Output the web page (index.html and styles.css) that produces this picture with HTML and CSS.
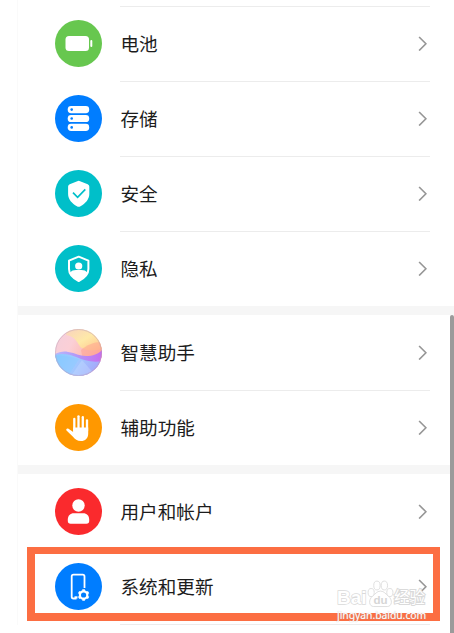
FILE: index.html
```
<!DOCTYPE html>
<html lang="zh-CN">
<head>
  <meta charset="UTF-8">
  <meta name="viewport" content="width=device-width, initial-scale=1.0">
  <title>设置</title>
  <link rel="stylesheet" href="styles.css">
</head>
<body>
  <div class="settings">
    <div class="group">
      <div class="item">
        <svg class="icon" viewBox="0 0 47 47">
          <circle cx="23.5" cy="23.5" r="23.5" fill="#67c74f"/>
          <rect x="10.5" y="16" width="23.5" height="15" rx="3.5" fill="#fff"/>
          <rect x="35.3" y="20" width="2" height="7" rx="1" fill="#fff"/>
        </svg>
        <div class="content"><span class="label">电池</span><svg class="arrow" viewBox="0 0 9 16"><path d="M1 1l7 7-7 7"/></svg></div>
      </div>
      <div class="item">
        <svg class="icon" viewBox="0 0 47 47">
          <circle cx="23.5" cy="23.5" r="23.5" fill="#007dff"/>
          <g fill="#fff">
            <rect x="12.7" y="11" width="21.5" height="7.2" rx="3.4"/>
            <rect x="12.7" y="19.9" width="21.5" height="7.2" rx="3.4"/>
            <rect x="12.7" y="28.8" width="21.5" height="7.2" rx="3.4"/>
          </g>
          <g fill="#007dff">
            <circle cx="16.7" cy="14.6" r="1.3"/>
            <circle cx="16.7" cy="23.5" r="1.3"/>
            <circle cx="16.7" cy="32.4" r="1.3"/>
          </g>
        </svg>
        <div class="content"><span class="label">存储</span><svg class="arrow" viewBox="0 0 9 16"><path d="M1 1l7 7-7 7"/></svg></div>
      </div>
      <div class="item">
        <svg class="icon" viewBox="0 0 47 47">
          <circle cx="23.5" cy="23.5" r="23.5" fill="#00bfc9"/>
          <path d="M22.3 11.2q1.4-.7 2.8 0l7.6 3q1.6.7 1.6 2.4v7.4c0 5.5-4 9.5-8.8 12.2q-1.8 1-3.6 0c-4.8-2.7-8.8-6.7-8.8-12.2v-7.4q0-1.7 1.6-2.4z" fill="#fff"/>
          <path d="M18 22.7l4.600 4.600 7.700-8" fill="none" stroke="#00bfc9" stroke-width="1.7"/>
        </svg>
        <div class="content"><span class="label">安全</span><svg class="arrow" viewBox="0 0 9 16"><path d="M1 1l7 7-7 7"/></svg></div>
      </div>
      <div class="item">
        <svg class="icon" viewBox="0 0 47 47">
          <circle cx="23.5" cy="23.5" r="23.5" fill="#00bfc9"/>
          <path d="M23.700 11.700l9.700 4v8.300c0 5.500-4 9.200-9.700 12-5.700-2.800-9.700-6.500-9.700-12v-8.300z" fill="none" stroke="#fff" stroke-width="2" stroke-linejoin="round"/>
          <circle cx="23.7" cy="21" r="3.6" fill="#fff"/>
          <path d="M15 27.500c1.500-1.700 3.500-2.500 6-2.500h5.400c2.500 0 4.500.8 6 2.500-1.500 3.500-4.500 6.500-8.700 8.500-4.200-2-7.200-5-8.700-8.500z" fill="#fff"/>
        </svg>
        <div class="content"><span class="label">隐私</span><svg class="arrow" viewBox="0 0 9 16"><path d="M1 1l7 7-7 7"/></svg></div>
      </div>
    </div>

    <div class="group">
      <div class="item">
        <svg class="icon" viewBox="0 0 47 47">
          <defs>
            <linearGradient id="sky" x1="0" y1="0" x2="1" y2=".5">
              <stop offset="0" stop-color="#f3cfdc"/>
              <stop offset=".4" stop-color="#fbcfd6"/>
              <stop offset="1" stop-color="#ffae9a"/>
            </linearGradient>
            <linearGradient id="sun" x1="0" y1="0" x2="1" y2="1">
              <stop offset="0" stop-color="#f9d2bf"/>
              <stop offset=".5" stop-color="#fee9a8"/>
              <stop offset="1" stop-color="#ffc28a"/>
            </linearGradient>
            <linearGradient id="wave" x1="0" y1="0" x2="1" y2="0">
              <stop offset="0" stop-color="#b7b9fb"/>
              <stop offset=".5" stop-color="#b295f8"/>
              <stop offset="1" stop-color="#c86cee"/>
            </linearGradient>
            <linearGradient id="sea" x1="0" y1="0" x2="1" y2=".3">
              <stop offset="0" stop-color="#8bcbff"/>
              <stop offset=".5" stop-color="#a2cbff"/>
              <stop offset="1" stop-color="#a5a8fb"/>
            </linearGradient>
            <clipPath id="ball"><circle cx="23.5" cy="23.5" r="23.5"/></clipPath>
          </defs>
          <g clip-path="url(#ball)">
            <rect width="47" height="47" fill="url(#sky)"/>
            <path d="M12 0h35v20c-7 2-15 2-20-1s-4-11-16-13z" fill="url(#sun)"/>
            <path d="M26 21c6-5 12-8 21-8v18H28z" fill="#ffa08f" opacity=".5"/>
            <path d="M0 25c4-2 9-3 13-2 8 1 11 4 18 4s12-2 16-6v26H0z" fill="url(#wave)"/>
            <path d="M0 26c8-2 14-1 21 2s17 6 26 4v15H0z" fill="url(#sea)"/>
            <path d="M24 30L13 47H0V27c10-1 16 1 24 3z" fill="#7acaff" opacity=".3"/>
            <path d="M27 31l14 16H16z" fill="#c5dcff" opacity=".4"/>
          </g>
          <circle cx="23.5" cy="23.5" r="23" fill="none" stroke="#b7a0b5" stroke-opacity=".45" stroke-width="1"/>
        </svg>
        <div class="content"><span class="label">智慧助手</span><svg class="arrow" viewBox="0 0 9 16"><path d="M1 1l7 7-7 7"/></svg></div>
      </div>
      <div class="item">
        <svg class="icon" viewBox="0 0 47 47">
          <circle cx="23.5" cy="23.5" r="23.5" fill="#ff9800"/>
          <g fill="none" stroke="#fff" stroke-width="2.3" stroke-linecap="round">
            <path d="M19.3 15V27"/>
            <path d="M23.5 12.3V26"/>
            <path d="M27.8 13.2V26"/>
            <path d="M32 16.4V27"/>
          </g>
          <path d="M18.200 23.500h15v6.200c0 4.500-3 7.300-7.200 7.300-4 0-6-1.500-8-4.200L11.500 26.500c-.8-1.500.6-2.600 2-1.800l4.700 3.300z" fill="#fff"/>
        </svg>
        <div class="content"><span class="label">辅助功能</span><svg class="arrow" viewBox="0 0 9 16"><path d="M1 1l7 7-7 7"/></svg></div>
      </div>
    </div>

    <div class="group">
      <div class="item">
        <svg class="icon" viewBox="0 0 47 47">
          <circle cx="23.5" cy="23.5" r="23.5" fill="#fa2a2d"/>
          <circle cx="23.5" cy="17.5" r="6.2" fill="#fff"/>
          <path d="M12.8 33v-1.500c0-4 2.500-6.300 6-6.300h9.400c3.500 0 6 2.300 6 6.300V33q0 2.800-2.800 2.800H15.600q-2.800 0-2.800-2.800z" fill="#fff"/>
        </svg>
        <div class="content"><span class="label">用户和帐户</span><svg class="arrow" viewBox="0 0 9 16"><path d="M1 1l7 7-7 7"/></svg></div>
      </div>
      <div class="item">
        <svg class="icon" viewBox="0 0 47 47">
          <circle cx="23.5" cy="23.5" r="23.5" fill="#007dff"/>
          <path d="M29.500 25V13.500q0-1.800-1.800-1.800h-9.200q-1.800 0-1.800 1.800v20.200q0 1.800 1.800 1.800h3" fill="none" stroke="#fff" stroke-width="1.8"/>
          <path d="M19.500 33.300h3v2.200h-3z" fill="#fff"/>
          <circle cx="28.600" cy="32" r="3.7" fill="none" stroke="#fff" stroke-width="2.2"/>
          <g stroke="#fff" stroke-width="2.6">
            <path d="M28.600 26.200v2M28.600 35.800v2M23.600 29.100l1.700 1M31.900 33.900l1.700 1M33.600 29.100l-1.700 1M25.300 33.900l-1.700 1"/>
          </g>
        </svg>
        <div class="content"><span class="label">系统和更新</span><svg class="arrow" viewBox="0 0 9 16"><path d="M1 1l7 7-7 7"/></svg></div>
      </div>
    </div>
    <div class="group last"></div>
  </div>

  <div class="scrollbar"></div>
  <div class="highlight"></div>

  <div class="watermark">
    <div class="logo">
      <span class="bai">Bai</span>
      <svg class="paw" viewBox="0 0 28 28">
        <ellipse cx="4.3" cy="12.5" rx="3.2" ry="4.2"/>
        <ellipse cx="10.3" cy="5.2" rx="3.3" ry="4.6"/>
        <ellipse cx="18" cy="5.2" rx="3.3" ry="4.6"/>
        <ellipse cx="23.7" cy="12.500" rx="3.2" ry="4.2"/>
        <path d="M14 11c4 0 5 3 8 5 5 4 4 11-1 11H7c-5 0-6-7-1-11 3-2 4-5 8-5z"/>
        <text x="14" y="24.5" text-anchor="middle">du</text>
      </svg>
      <span class="jy">经验</span>
    </div>
    <div class="url">jingyan.baidu.com</div>
  </div>
</body>
</html>
```
FILE: styles.css
```
body {
  margin: 0;
  height: 633px;
  overflow: hidden;
  position: relative;
  background: #fff;
  font-family: "Liberation Sans", "Noto Sans CJK SC", sans-serif;
}
.settings {
  margin-left: 17px;
  padding-top: 5.5px;
  border-left: 1px solid #fafafa;
}
.group {
  border-bottom: 9px solid #f6f6f6;
}
.group:nth-child(3) {
  border-bottom: 1px solid #fff;
}
.group.last {
  border: none;
  margin: -1px 24px 0 102px;
  border-top: 1px solid #ececec;
}
.item {
  display: flex;
  align-items: center;
  height: 75px;
  padding: 0 24px 0 36.5px;
}
.icon {
  width: 47px;
  height: 47px;
  margin-right: 18.5px;
  flex: none;
}
.content {
  flex: 1;
  display: flex;
  align-items: center;
  justify-content: space-between;
  height: 75px;
  box-sizing: border-box;
  border-top: 1px solid #ececec;
}
.group + .group .item:first-child .content {
  border-top-color: transparent;
}
.label {
  padding: 2px 0 0 0.5px;
  font-size: 18.6px;
  line-height: 28px;
  color: #1c1c1c;
}
.arrow {
  width: 9px;
  height: 15.5px;
  margin: 0 3px 0.5px 0;
  fill: none;
  stroke: #969696;
  stroke-width: 1.7;
}
.scrollbar {
  position: absolute;
  left: 450px;
  top: 315px;
  width: 4px;
  height: 330px;
  border-radius: 2px;
  background: #9b9b9b;
}
.highlight {
  position: absolute;
  left: 27px;
  top: 547px;
  width: 413px;
  height: 74px;
  box-sizing: border-box;
  border: 7px solid #fc6e42;
  border-left-width: 8px;
  border-bottom-width: 8px;
}
.watermark {
  position: absolute;
  left: 337px;
  top: 579px;
  width: 92px;
}
.logo {
  display: flex;
  align-items: flex-end;
  height: 29px;
}
.bai {
  width: 30px;
  font-size: 19px;
  font-weight: bold;
  line-height: 20px;
  color: #fff;
  -webkit-text-stroke: 1.4px #dadada;
  paint-order: stroke fill;
}
.paw {
  width: 27px;
  height: 28px;
  flex: none;
  fill: #fff;
  stroke: #dadada;
  stroke-width: 0.9;
}
.paw text {
  font-size: 12px;
  fill: #d6d6d6;
  stroke: none;
  font-weight: bold;
}
.jy {
  font-size: 15.5px;
  line-height: 20px;
  color: #fff;
  white-space: nowrap;
  -webkit-text-stroke: 2px #dadada;
  paint-order: stroke fill;
}
.url {
  font-family: "Noto Sans", sans-serif;
  font-size: 10.3px;
  line-height: 14px;
  color: #fff;
  white-space: nowrap;
  text-shadow: 0 0 1px #bbb;
}
```
